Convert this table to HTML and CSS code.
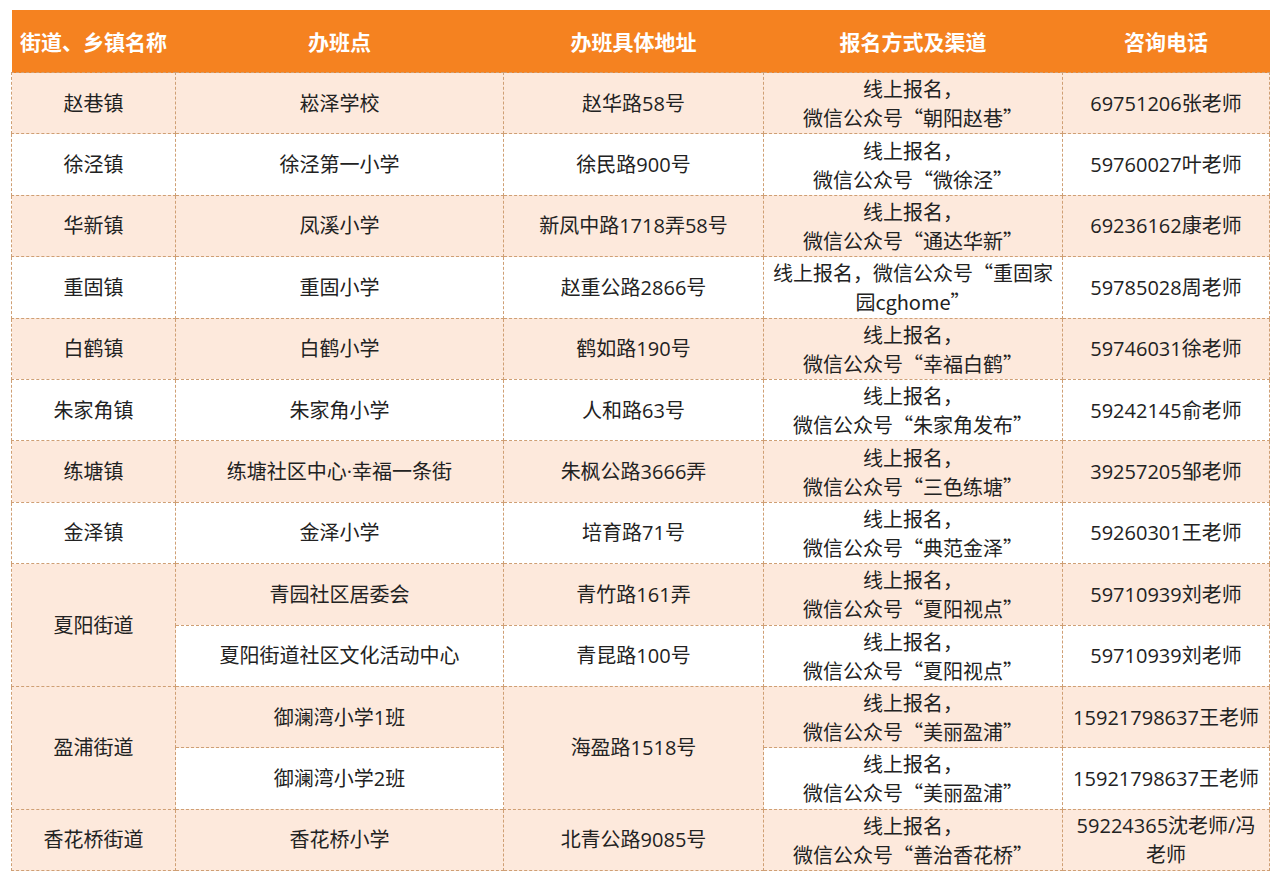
FILE: index.html
```html
<!DOCTYPE html>
<html lang="zh-CN">
<head>
<meta charset="utf-8">
<title>办班点</title>
<link rel="stylesheet" href="styles.css">
</head>
<body>
<table class="sheet">
  <colgroup>
    <col class="c1"><col class="c2"><col class="c3"><col class="c4"><col class="c5">
  </colgroup>
  <thead>
    <tr>
      <th>街道、乡镇名称</th>
      <th>办班点</th>
      <th>办班具体地址</th>
      <th>报名方式及渠道</th>
      <th>咨询电话</th>
    </tr>
  </thead>
  <tbody>
    <tr class="tint">
      <td>赵巷镇</td><td>崧泽学校</td><td>赵华路58号</td>
      <td class="via">线上报名，<br>微信公众号“朝阳赵巷”</td><td>69751206张老师</td>
    </tr>
    <tr>
      <td>徐泾镇</td><td>徐泾第一小学</td><td>徐民路900号</td>
      <td class="via">线上报名，<br>微信公众号“微徐泾”</td><td>59760027叶老师</td>
    </tr>
    <tr class="tint">
      <td>华新镇</td><td>凤溪小学</td><td>新凤中路1718弄58号</td>
      <td class="via">线上报名，<br>微信公众号“通达华新”</td><td>69236162康老师</td>
    </tr>
    <tr>
      <td>重固镇</td><td>重固小学</td><td>赵重公路2866号</td>
      <td class="via">线上报名，微信公众号“重固家<br>园cghome”</td><td>59785028周老师</td>
    </tr>
    <tr class="tint">
      <td>白鹤镇</td><td>白鹤小学</td><td>鹤如路190号</td>
      <td class="via">线上报名，<br>微信公众号“幸福白鹤”</td><td>59746031徐老师</td>
    </tr>
    <tr>
      <td>朱家角镇</td><td>朱家角小学</td><td>人和路63号</td>
      <td class="via">线上报名，<br>微信公众号“朱家角发布”</td><td>59242145俞老师</td>
    </tr>
    <tr class="tint">
      <td>练塘镇</td><td>练塘社区中心·幸福一条街</td><td>朱枫公路3666弄</td>
      <td class="via">线上报名，<br>微信公众号“三色练塘”</td><td>39257205邹老师</td>
    </tr>
    <tr>
      <td>金泽镇</td><td>金泽小学</td><td>培育路71号</td>
      <td class="via">线上报名，<br>微信公众号“典范金泽”</td><td>59260301王老师</td>
    </tr>
    <tr class="tint">
      <td rowspan="2">夏阳街道</td><td>青园社区居委会</td><td>青竹路161弄</td>
      <td class="via">线上报名，<br>微信公众号“夏阳视点”</td><td>59710939刘老师</td>
    </tr>
    <tr>
      <td>夏阳街道社区文化活动中心</td><td>青昆路100号</td>
      <td class="via">线上报名，<br>微信公众号“夏阳视点”</td><td>59710939刘老师</td>
    </tr>
    <tr class="tint">
      <td rowspan="2">盈浦街道</td><td>御澜湾小学1班</td><td rowspan="2">海盈路1518号</td>
      <td class="via">线上报名，<br>微信公众号“美丽盈浦”</td><td>15921798637王老师</td>
    </tr>
    <tr>
      <td>御澜湾小学2班</td>
      <td class="via">线上报名，<br>微信公众号“美丽盈浦”</td><td>15921798637王老师</td>
    </tr>
    <tr class="tint">
      <td>香花桥街道</td><td>香花桥小学</td><td>北青公路9085号</td>
      <td class="via">线上报名，<br>微信公众号“善治香花桥”</td><td>59224365沈老师/冯<br>老师</td>
    </tr>
  </tbody>
</table>
</body>
</html>
```

FILE: styles.css
```css
html, body {
  margin: 0;
  background: #ffffff;
}

body {
  padding: 10px 11px;
  font-family: "Noto Sans CJK SC", "Noto Sans", sans-serif;
  color: #222222;
}

.sheet {
  width: 1258px;
  border-collapse: collapse;
  table-layout: fixed;
}

.c1 { width: 164px; }
.c2 { width: 328px; }
.c3 { width: 260px; }
.c4 { width: 299px; }
.c5 { width: 207px; }

.sheet th {
  height: 62px;
  padding: 0;
  background: #f58220;
  color: #ffffff;
  font-family: "Noto Sans CJK SC", sans-serif;
  font-size: 21px;
  font-weight: 700;
  text-align: center;
  vertical-align: middle;
  border: none;
}

.sheet td {
  height: 60.4px;
  padding: 0 3px;
  font-family: "Open Sans", "Noto Sans CJK SC", sans-serif;
  font-size: 20px;
  line-height: 29px;
  text-align: center;
  vertical-align: middle;
  border: 1px dashed #cf9f74;
  background: #ffffff;
}

.sheet td.via {
  font-family: "Noto Sans CJK SC", sans-serif;
}

.sheet tr.tint td {
  background: #fde9dc;
}
```
